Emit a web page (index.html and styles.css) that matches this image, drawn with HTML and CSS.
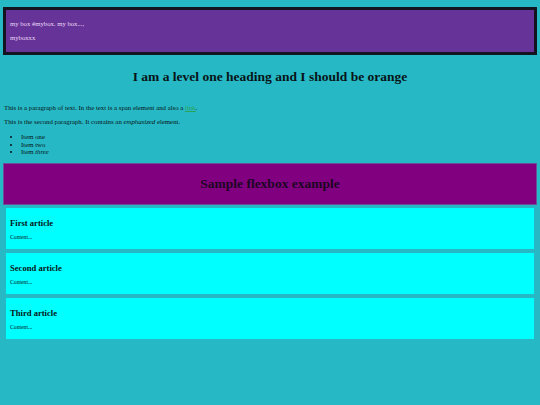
FILE: index.html
```html
<!DOCTYPE html>
<html>
<head>
<meta charset="utf-8">
<link rel="stylesheet" href="styles.css">
</head>
<body>
<div class="mybox">
  <p>my box #mybox. my box...,</p>
  <p>myboxxx</p>
</div>
<h1 class="title">I am a level one heading and I should be orange</h1>
<p class="text">This is a paragraph of text. In the text is a <span>span element</span> and also a <a href="#">link</a>.</p>
<p class="text">This is the second paragraph. It contains an <em>emphasized</em> element.</p>
<ul class="list">
  <li>Item one</li>
  <li>Item two</li>
  <li>Item <em>three</em></li>
</ul>
<header class="flex-header">
  <h2>Sample flexbox example</h2>
</header>
<section class="articles">
  <article class="card">
    <h3>First article</h3>
    <p>Content...</p>
  </article>
  <article class="card">
    <h3>Second article</h3>
    <p>Content...</p>
  </article>
  <article class="card">
    <h3>Third article</h3>
    <p>Content...</p>
  </article>
</section>
</body>
</html>
```
FILE: styles.css
```css
html {
  background: #26b9c5;
}
body {
  margin: 0;
  padding: 7px 3px 0;
  font-family: "Liberation Serif", "Times New Roman", serif;
  color: #061418;
  background: #26b9c5;
}
.mybox {
  border: 3px solid #141420;
  background: #663399;
  padding: 10px 4px;
  color: #ead8f4;
  font-size: 6.7px;
  line-height: 8px;
}
.mybox p {
  margin: 0;
}
.mybox p + p {
  margin-top: 6px;
}
.title {
  margin: 13px 0 18px;
  font-size: 13.5px;
  line-height: 18px;
  text-align: center;
  font-weight: bold;
}
.text {
  margin: 0 0 6px 1px;
  font-size: 6.8px;
  line-height: 8px;
}
.text a {
  color: #2aa356;
}
.list {
  margin: 7px 0 7px;
  padding-left: 18px;
  font-size: 6.8px;
  line-height: 7.5px;
}
.list li::marker {
  font-size: 8px;
}
.flex-header {
  background: #800080;
  border: 1px solid #6a4f9a;
  height: 40px;
  display: flex;
  align-items: center;
  justify-content: center;
}
.flex-header h2 {
  margin: 0;
  font-size: 13.5px;
  line-height: 18px;
  color: #1d0624;
}
.articles {
  display: flex;
  flex-direction: column;
  gap: 4px;
  padding: 3px 3px 0;
}
.card {
  background: #00ffff;
  padding: 0 4px 9px;
}
.card h3 {
  margin: 0;
  padding-top: 10px;
  font-size: 8.6px;
  line-height: 10px;
}
.card p {
  margin: 6px 0 0;
  font-size: 5.7px;
  line-height: 6px;
}
```
